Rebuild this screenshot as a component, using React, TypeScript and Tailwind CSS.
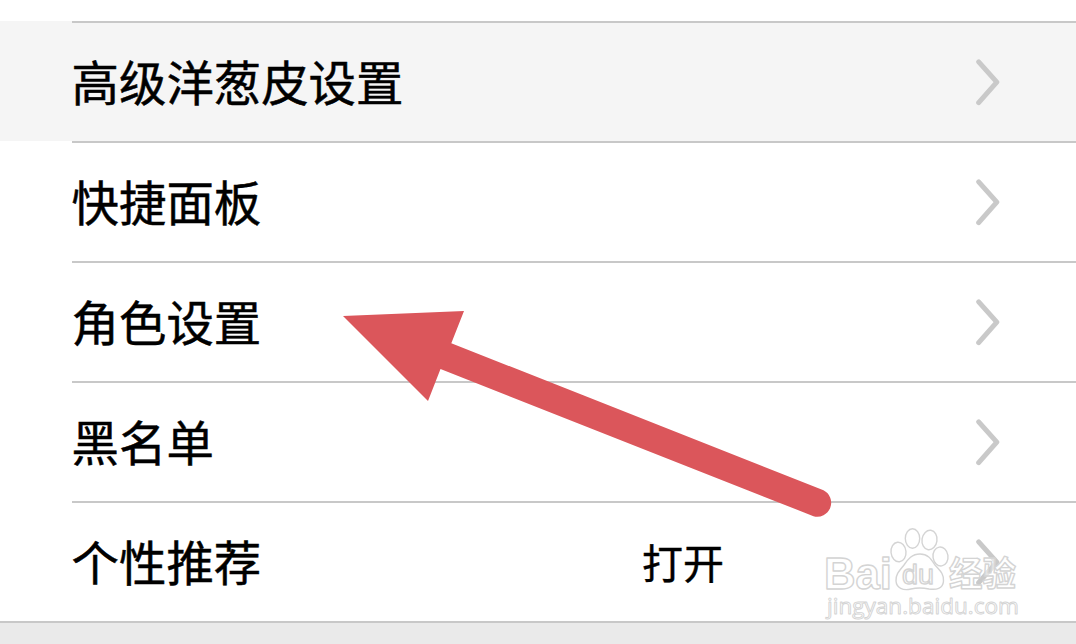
import React from "react";
import clsx from "clsx";

type Item = {
  title: string;
  value?: string;
  active?: boolean;
};

const ITEMS: Item[] = [
  { title: "高级洋葱皮设置", active: true },
  { title: "快捷面板" },
  { title: "角色设置" },
  { title: "黑名单" },
  { title: "个性推荐", value: "打开" },
];

const Chevron = () => (
  <svg
    className="w-7 h-12 shrink-0"
    viewBox="0 0 28 48"
    fill="none"
    stroke="#c9c9c9"
    strokeWidth="5"
    strokeLinecap="round"
    strokeLinejoin="round"
  >
    <path d="M4.7 3.8 L22.8 24.2 L4.7 44.6" />
  </svg>
);

const Row = ({ title, value, active }: Item) => (
  <li className={clsx("h-[120px] pl-[72px]", active && "bg-[#f5f5f5]")}>
    <div className="h-full flex items-center border-t-2 border-[#c8c8c8] pr-[74px]">
      <span className="flex-1 -ml-[0.4px] text-[47.4px] leading-[60px] pb-0.5 whitespace-nowrap [-webkit-text-stroke:0.5px_black]">
        {title}
      </span>
      {value && (
        <span className="w-[332px] text-[41px] leading-[60px] pb-0.5 [-webkit-text-stroke:0.4px_black]">
          {value}
        </span>
      )}
      <Chevron />
    </div>
  </li>
);

const Pointer = () => (
  <svg
    className="absolute left-[340px] top-[305px] w-[500px] h-[220px]"
    viewBox="340 305 500 220"
    fill="#db565b"
  >
    <path d="M343 316 L464 311 L451.3 343.2 L823.5 490.2 A14 14 0 0 1 813.5 516.2 L440.5 369 L428 401 Z" />
  </svg>
);

const Watermark = () => (
  <svg
    className="absolute left-[816px] top-[516px] w-[220px] h-[108px]"
    viewBox="0 0 220 108"
    fill="#fff"
    fillOpacity="0.5"
    stroke="#d4d4d4"
    strokeWidth="1.4"
    strokeLinejoin="round"
  >
    <text
      x="8"
      y="72.5"
      fontSize="44"
      fontWeight="700"
      fontFamily="'Liberation Sans', sans-serif"
      textLength="68"
      lengthAdjust="spacingAndGlyphs"
    >
      Bai
    </text>
    <ellipse cx="82.5" cy="36" rx="7.5" ry="9.8" transform="rotate(-6 82.5 36)" />
    <ellipse cx="96.5" cy="22.5" rx="7.2" ry="9.8" />
    <ellipse cx="113.5" cy="24" rx="7.5" ry="9.8" transform="rotate(8 113.5 24)" />
    <ellipse cx="124.5" cy="40.5" rx="7.5" ry="9.5" transform="rotate(-8 124.5 40.5)" />
    <path d="M104 38 C112 38 115 43 119 49 C123 54 128 57 127.5 65 C127 73 120 74 113 73 C106 71.5 101 71.5 95 73 C87 75 80.5 72 80 65 C79.5 58 84 54 88 49 C92 43 96 38 104 38 Z" />
    <text
      x="86"
      y="68"
      fontSize="27"
      fontFamily="'Liberation Sans', sans-serif"
      textLength="32"
      lengthAdjust="spacingAndGlyphs"
    >
      du
    </text>
    <text
      x="133"
      y="70"
      fontSize="34"
      fontWeight="700"
      fontFamily="'Noto Sans CJK SC', sans-serif"
      textLength="67"
      lengthAdjust="spacingAndGlyphs"
    >
      经验
    </text>
    <text
      x="11"
      y="98"
      fontSize="21"
      strokeWidth="0.9"
      fontFamily="'Open Sans', sans-serif"
      textLength="192"
      lengthAdjust="spacingAndGlyphs"
    >
      jingyan.baidu.com
    </text>
  </svg>
);

const App = () => {
  return (
    <div className="relative w-[1076px] h-[644px] overflow-hidden flex flex-col bg-white text-black font-['Noto_Sans_CJK_SC',sans-serif]">
      <ul className="pt-[21px]">
        {ITEMS.map((item) => (
          <Row key={item.title} {...item} />
        ))}
      </ul>
      <div className="flex-1 bg-[#eaeaea] border-t-2 border-[#c8c8c8]" />
      <Pointer />
      <Watermark />
    </div>
  );
};

export default App;
